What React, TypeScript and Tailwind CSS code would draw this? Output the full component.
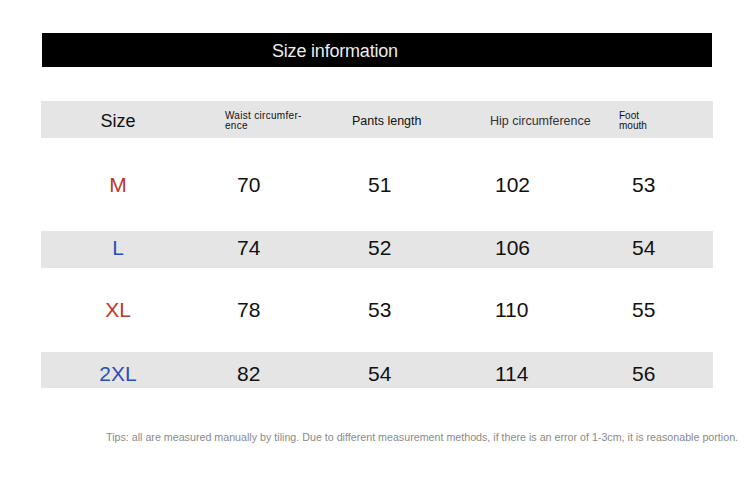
import React from 'react';

interface SizeRow {
  size: string;
  color: string;
  waist: number;
  pants: number;
  hip: number;
  foot: number;
  shaded: boolean;
  box: string;
}

const rows: SizeRow[] = [
  { size: 'M', color: 'text-[#b9392b]', waist: 70, pants: 51, hip: 102, foot: 53, shaded: false, box: 'h-[93px]' },
  { size: 'L', color: 'text-[#2c4fb5]', waist: 74, pants: 52, hip: 106, foot: 54, shaded: true, box: 'h-[37px] pb-[4px]' },
  { size: 'XL', color: 'text-[#b9392b]', waist: 78, pants: 53, hip: 110, foot: 55, shaded: false, box: 'h-[84px]' },
  { size: '2XL', color: 'text-[#2c4fb5]', waist: 82, pants: 54, hip: 114, foot: 56, shaded: true, box: 'h-[36px] pt-[6px]' },
];

const cols = 'grid grid-cols-[184px_127px_138px_129px_94px] items-center';

export default function App() {
  return (
    <div className="w-[750px] h-[480px] bg-white pt-[33px] font-['Liberation_Sans',Arial,sans-serif] text-[#111]">
      {/* title bar */}
      <div className="ml-[42px] w-[670px] h-[34px] bg-black flex items-center pl-[230px]">
        <span className="text-[18px] text-[#ececec] tracking-[-0.2px] pt-[2px]">Size information</span>
      </div>

      <div className="ml-[41px] w-[672px] mt-[34px]">
        {/* header */}
        <div className={`${cols} h-[37px] pt-[4px] bg-[#e5e5e5]`}>
          <div className="text-center pr-[30px] text-[18px]">Size</div>
          <div className="text-[10px] leading-[10px] tracking-[0.3px] pb-[2px]">
            Waist circumfer-<br />ence
          </div>
          <div className="text-[12.5px]">Pants length</div>
          <div className="text-[12.5px] text-[#333]">Hip circumference</div>
          <div className="text-[10px] leading-[10px] pb-[2px]">
            Foot<br />mouth
          </div>
        </div>

        {rows.map(r => (
          <div key={r.size} className={`${cols} ${r.box} ${r.shaded ? 'bg-[#e5e5e5]' : ''} text-[21px]`}>
            <div className={`text-center pr-[30px] ${r.color}`}>{r.size}</div>
            <div className="pl-[12px]">{r.waist}</div>
            <div className="pl-[16px]">{r.pants}</div>
            <div className="pl-[5px]">{r.hip}</div>
            <div className="pl-[13px]">{r.foot}</div>
          </div>
        ))}
      </div>

      <p className="ml-[106px] mt-[41px] text-[10.7px] text-[#8a8a8a] whitespace-nowrap">
        Tips: all are measured manually by tiling. Due to different measurement methods, if there is an error of 1-3cm, it is reasonable portion.
      </p>
    </div>
  );
}
